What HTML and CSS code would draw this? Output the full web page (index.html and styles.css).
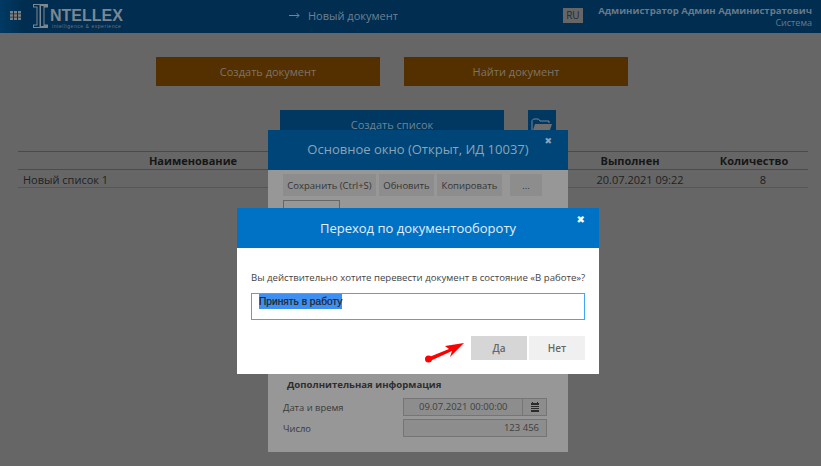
FILE: index.html
```html
<!DOCTYPE html>
<html lang="ru">
<head>
<meta charset="utf-8">
<title>Новый документ</title>
<link rel="stylesheet" href="styles.css">
</head>
<body>
<header class="topbar">
  <svg class="apps" width="11" height="9" viewBox="0 0 11 9"><path d="M0 0h3v2.500H0zM4 0h3v2.500H4zM8 0h3v2.500H8zM0 3.250h3v2.500H0zM4 3.250h3v2.500H4zM8 3.250h3v2.500H8zM0 6.500h3V9H0zM4 6.500h3V9H4zM8 6.500h3V9H8z"/></svg>
  <div class="logo">
    <svg class="logo-i" width="15" height="24" viewBox="0 0 15 24"><path fill-rule="evenodd" d="M0 0h15v3.500h-3.500v17H15V24H0v-3.500h3.500v-17H0zM1 1v1.500h3.500v19H1V23h5.500V1zM8 2v20h2.500V2z"/></svg>
    <div class="logo-text">
      <span class="logo-name">NTELLEX</span>
      <span class="logo-tag">intelligence &amp; experience</span>
    </div>
  </div>
  <div class="crumb">
    <svg width="11" height="7" viewBox="0 0 11 7"><path d="M0 3.500h10M7.500 1l2.500 2.500L7.500 6"/></svg>
    <span>Новый документ</span>
  </div>
  <span class="lang">RU</span>
  <div class="user">
    <strong>Администратор Админ Администратович</strong>
    <span>Система</span>
  </div>
</header>

<main class="page">
  <div class="actions">
    <button class="btn-orange">Создать документ</button>
    <button class="btn-orange">Найти документ</button>
  </div>
  <div class="list-actions">
    <button class="btn-list">Создать список</button>
    <button class="btn-folder">
      <svg width="22" height="18" viewBox="0 0 22 18"><path class="folder-back" d="M1 16V3.500L2.500 2h5L9 4h9v2"/><path class="folder-front" d="M1 16 4 7h17l-3 9z"/></svg>
    </button>
  </div>
  <div class="table">
    <div class="row head">
      <span class="c-name">Наименование</span>
      <span class="c-done">Выполнен</span>
      <span class="c-count">Количество</span>
    </div>
    <div class="row">
      <span class="c-name">Новый список 1</span>
      <span class="c-done">20.07.2021 09:22</span>
      <span class="c-count">8</span>
    </div>
  </div>
</main>

<section class="window main-window">
  <div class="window-head">Основное окно (Открыт, ИД 10037)<span class="close">✖</span></div>
  <div class="toolbar">
    <button class="save">Сохранить (Ctrl+S)</button>
    <button class="refresh">Обновить</button>
    <button class="copy">Копировать</button>
    <button class="more">...</button>
  </div>
  <div class="tabs"><span class="tab"></span></div>
  <h3 class="group">Дополнительная информация</h3>
  <div class="field field-date">
    <label>Дата и время</label>
    <div class="value date"><span>09.07.2021 00:00:00</span>
      <i class="cal"><svg width="10" height="11" viewBox="0 0 10 11"><path d="M1 1h1V0h1v1h4V0h1v1h1v2H1zM1 4h8v1H1zM1 6h8v1H1zM1 8h8v2H1z"/></svg></i>
    </div>
  </div>
  <div class="field field-num">
    <label>Число</label>
    <div class="value num">123 456</div>
  </div>
</section>

<section class="window dialog">
  <div class="dialog-head">Переход по документообороту<span class="close">✖</span></div>
  <div class="dialog-body">
    <p>Вы действительно хотите перевести документ в состояние «В работе»?</p>
    <div class="textarea"><span class="selected">Принять в работу</span></div>
    <div class="dialog-actions">
      <button class="yes">Да</button>
      <button class="no">Нет</button>
    </div>
  </div>
</section>

<svg class="pointer" width="40" height="24" viewBox="0 0 40 24">
  <circle cx="3.500" cy="19" r="3.500"/>
  <path d="M3 17.500 24 9l-4-3 19-3-14 14 2-6L5 21z"/>
</svg>
</body>
</html>
```
FILE: styles.css
```css
* { box-sizing: border-box; }
html, body { margin: 0; height: 466px; overflow: hidden; }
body {
  position: relative;
  background: #666;
  font-family: "Open Sans", "Liberation Sans", sans-serif;
  font-size: 11px;
  color: #222;
}
button { font: inherit; border: 0; padding: 0; }

.topbar {
  height: 33px;
  background: linear-gradient(90deg, #003a64 0, #002d50 24px, #002d50 100%);
  display: flex;
  align-items: center;
  padding: 0 9px 0 10px;
  color: #6f8191;
}
.apps { fill: #7e7e7e; margin-top: -2px; flex: none; }
.logo { display: flex; margin-left: 12px; width: 91px; height: 24px; margin-top: -1px; flex: none; }
.logo-i { fill: #7d8790; flex: none; }
.logo-text { display: flex; flex-direction: column; margin-left: 2px; }
.logo-name {
  font: bold 16px/16px "Liberation Sans", sans-serif;
  color: #7d8790;
  margin-top: 4px;
}
.logo-tag {
  font: 5px/5px "Liberation Sans", sans-serif;
  color: #6a7680;
  margin: 0 0 0 2px;
  letter-spacing: 0.55px;
  white-space: nowrap;
}
.crumb { display: flex; align-items: center; gap: 8px; margin-left: 165px; font-size: 11px; margin-top: -3px; flex: none; }
.crumb svg { fill: none; stroke: #74838f; stroke-width: 1; }
.lang {
  width: 20px; height: 15px;
  background: #666;
  color: #1d2a33;
  font-size: 10px;
  line-height: 15px;
  text-align: center;
  margin: -3px 0 0 165px;
  flex: none;
}
.user {
  margin-left: auto;
  display: flex;
  flex-direction: column;
  align-items: flex-end;
  font-size: 9px;
  line-height: 12px;
  color: #677a8a;
  white-space: nowrap;
}
.user strong { font-size: 9.600px; font-weight: 700; }

.page { padding: 24px 13px 0 18px; }
.actions { display: flex; gap: 24px; padding-left: 138px; }
.btn-orange {
  width: 224px; height: 29px;
  background: #543000;
  color: #7c7468;
  font-size: 11px;
}
.list-actions { display: flex; gap: 24px; margin: 24px 0 0 262px; }
.btn-list {
  width: 224px; height: 29px;
  background: #003862;
  color: #6c8498;
  font-size: 11px;
}
.btn-folder {
  width: 28px; height: 29px;
  background: #003862;
  display: flex;
  align-items: center;
  justify-content: center;
  padding-top: 2px;
}
.folder-back { fill: none; stroke: #78848e; stroke-width: 1; }
.folder-front { fill: #6d6d6d; }

.table { margin-top: 12px; border-top: 1px solid #4a4a4a; font-size: 11px; }
.row {
  display: grid;
  grid-template-columns: 572px 128px 90px;
  height: 18px;
  line-height: 17px;
  border-bottom: 1px solid #4c4c4c;
  color: #1f1f1f;
}
.row:last-child { border-bottom-color: #555; line-height: 19px; }
.head { font-weight: 700; color: #161616; text-align: center; }
.head .c-name { width: 350px; }
.row:not(.head) .c-name { padding-left: 5px; }
.row:not(.head) .c-done, .row:not(.head) .c-count { text-align: center; }
.row:not(.head) .c-done { padding-right: 28px; }
.head .c-done { padding-right: 48px; }
.head .c-count { padding-right: 18px; }

.window { position: absolute; }
.main-window {
  left: 268px; top: 130px;
  width: 300px; height: 322px;
  background: #979797;
}
.window-head {
  position: relative;
  height: 40px;
  background: #004577;
  color: #8ba4b8;
  font-size: 13px;
  font-weight: 500;
  line-height: 39px;
  text-align: center;
}
.close {
  position: absolute;
  right: 16px; top: 5px;
  font: 9px/12px "DejaVu Sans", sans-serif;
}
.toolbar { display: flex; gap: 3px; padding: 4px 0 0 15px; }
.toolbar button {
  height: 22px;
  background: #8d8d8d;
  color: #353535;
  font-size: 9.500px;
}
.toolbar .save { width: 93px; }
.toolbar .refresh { width: 55px; }
.toolbar .copy { width: 65px; }
.toolbar .more { width: 32px; margin-left: 5px; }
.tabs { padding: 4px 0 0 15px; height: 26px; }
.tab { display: block; width: 57px; height: 22px; border: 1px solid #666; }
.group {
  margin: 0;
  position: absolute;
  left: 19px; top: 248px;
  font-size: 9.600px;
  line-height: 14px;
  font-weight: 700;
  color: #2e2e2e;
}
.field {
  position: absolute;
  left: 15px; width: 264px;
  display: flex;
  justify-content: space-between;
  align-items: center;
  font-size: 9.400px;
  color: #3a3a3a;
}
.field-date { top: 268px; }
.field-num { top: 289px; }
.value {
  width: 144px;
  height: 18px;
  border: 1px solid #757575;
  background: #8d8d8d;
  font-size: 9.500px;
  line-height: 16px;
  color: #3f3f3f;
}
.date { display: flex; padding-left: 15px; }
.date span { flex: 1; }
.cal { width: 24px; border-left: 1px solid #757575; display: flex; align-items: center; justify-content: center; }
.cal svg { fill: #2a2a2a; }
.num { text-align: right; padding-right: 7px; }

.dialog {
  left: 237px; top: 208px;
  width: 362px; height: 166px;
  background: #fff;
}
.dialog-head {
  position: relative;
  height: 40px;
  background: #0072c6;
  color: #e3eef7;
  font-size: 13px;
  font-weight: 500;
  line-height: 41px;
  text-align: center;
}
.dialog-head .close { color: #fff; right: 14px; top: 6px; font-size: 10px; }
.dialog-body { padding: 22px 14px 0; }
.dialog-body p { margin: 0 0 7px; font-size: 9.600px; line-height: 16px; color: #444; white-space: nowrap; }
.textarea {
  height: 27px;
  border: 1px solid #42a5f5;
  padding: 0 7px;
  font: 10.200px/15px "Liberation Sans", sans-serif;
  color: #222;
}
.selected { background: #3d90f2; display: inline-block; height: 15px; -webkit-text-stroke: 0.2px #222; }
.dialog-actions { display: flex; justify-content: flex-end; gap: 2px; margin-top: 16px; }
.dialog-actions button { width: 56px; height: 24px; font-size: 10px; font-weight: 600; color: #666; }
.yes { background: #d6d6d6; }
.no { background: #f0f0f0; }

.pointer { position: absolute; left: 425px; top: 340px; fill: #f00; }
```
